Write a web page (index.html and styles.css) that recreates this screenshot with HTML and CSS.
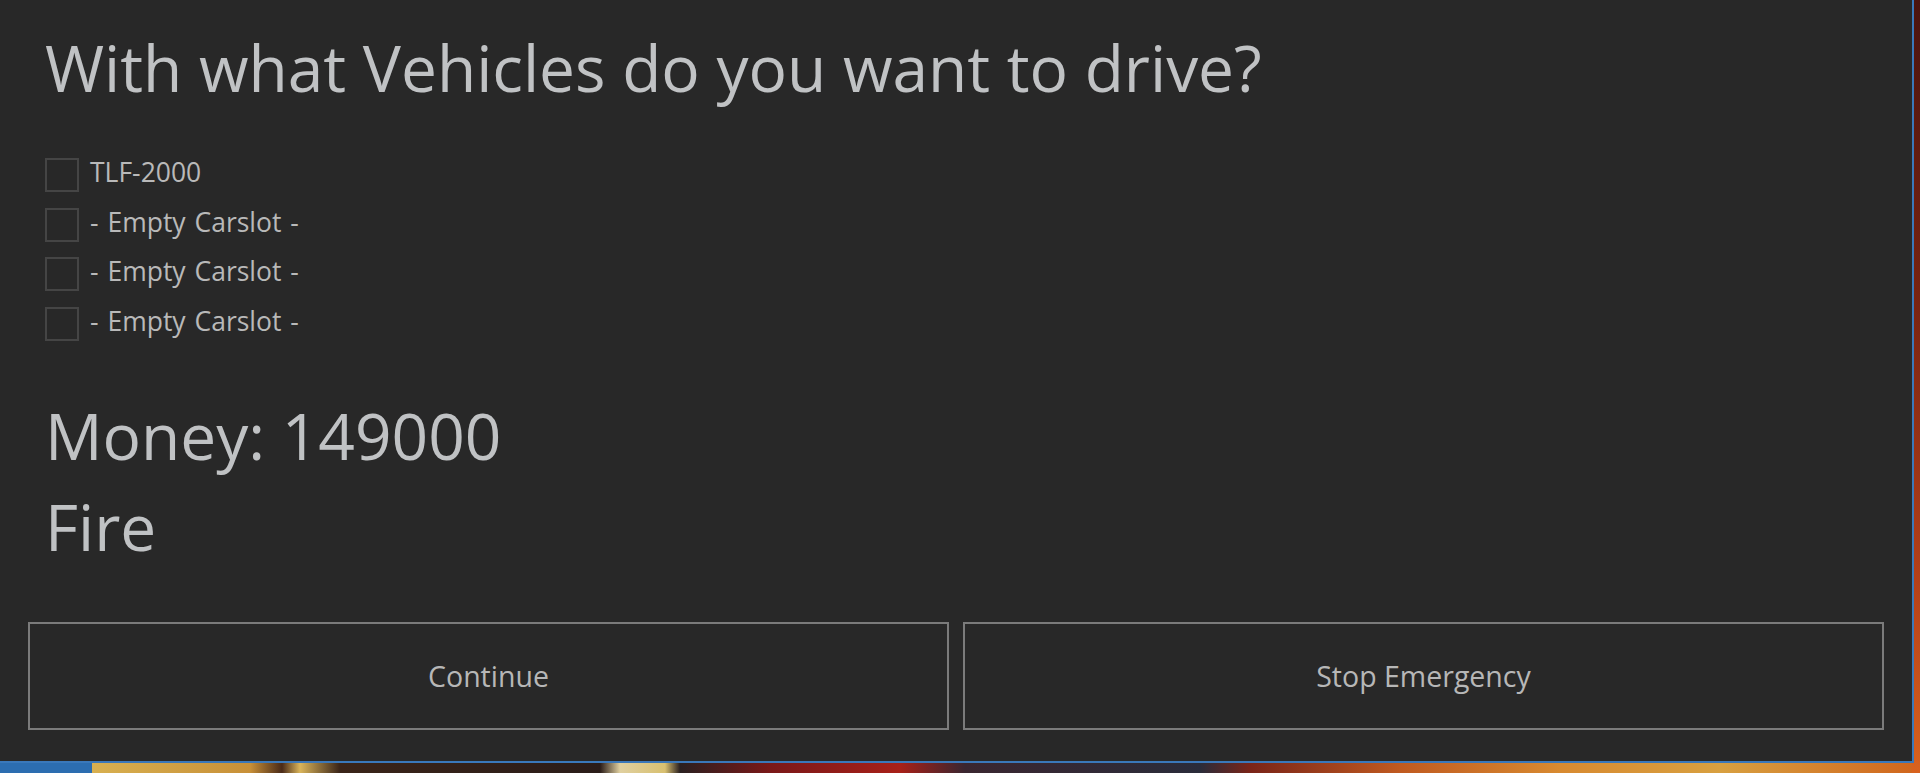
FILE: index.html
```html
<!DOCTYPE html>
<html lang="en">
<head>
<meta charset="utf-8">
<title>Vehicle selection</title>
<link rel="stylesheet" href="styles.css">
</head>
<body>
<div class="window">
  <div class="content">
    <h1 class="title">With what Vehicles do you want to drive?</h1>
    <ul class="slots">
      <li class="slot"><span class="box"></span><span class="label">TLF-2000</span></li>
      <li class="slot"><span class="box"></span><span class="label">- Empty Carslot -</span></li>
      <li class="slot"><span class="box"></span><span class="label">- Empty Carslot -</span></li>
      <li class="slot"><span class="box"></span><span class="label">- Empty Carslot -</span></li>
    </ul>
    <div class="stat money">Money: 149000</div>
    <div class="stat">Fire</div>
  </div>
  <div class="actions">
    <button class="btn">Continue</button>
    <button class="btn">Stop Emergency</button>
  </div>
</div>
</body>
</html>
```
FILE: styles.css
```css
html, body {
  margin: 0;
  padding: 0;
}
body {
  width: 1920px;
  height: 773px;
  overflow: hidden;
  font-family: "Open Sans", "Noto Sans", sans-serif;
  background:
    linear-gradient(180deg, #4a1410 0%, #7a2412 40%, #b4401a 75%, #d8621e 100%) right top / 8px 100% no-repeat,
    linear-gradient(90deg,
      #2c6db0 0px, #2c6db0 92px,
      #d8b050 92px, #c89038 250px, #4a2a18 282px, #d9b45a 300px, #3a2418 340px,
      #2a1c18 600px, #e0d0a0 620px, #d8c070 665px, #2a2020 680px,
      #7a1818 770px, #a82018 900px, #3a2630 965px, #2a2c3a 1200px,
      #7a2418 1250px, #c05a20 1400px, #d88a30 1560px, #d8a040 1720px, #d0641c 1920px) left bottom / 100% 12px no-repeat,
    #2a2a2a;
}
.window {
  box-sizing: border-box;
  width: 1914px;
  height: 763px;
  background: #282828;
  border-right: 2px solid #3a78ba;
  border-bottom: 2px solid #3a78ba;
  padding: 28px 28px 31px 28px;
  display: flex;
  flex-direction: column;
}
.content {
  padding-left: 17px;
  color: #c0c2c4;
}
.title {
  margin: 0;
  font-weight: 400;
  font-size: 64px;
  line-height: 80px;
  color: #c0c2c4;
}
.slots {
  list-style: none;
  margin: 50px 0 0 0;
  padding: 0;
  display: flex;
  flex-direction: column;
  gap: 15.7px;
}
.slot {
  display: flex;
  align-items: flex-start;
  height: 34px;
}
.box {
  box-sizing: border-box;
  width: 34px;
  height: 34px;
  border: 2px solid #454545;
  flex: none;
}
.label {
  margin-left: 11px;
  font-size: 26.5px;
  line-height: 28px;
  color: #b9b9b9;
  word-spacing: 2px;
}
.stat {
  font-size: 64px;
  line-height: 91px;
  color: #c0c2c4;
}
.money {
  margin-top: 49px;
}
.actions {
  margin-top: auto;
  display: flex;
  gap: 14px;
}
.btn {
  flex: 1;
  box-sizing: border-box;
  height: 108px;
  background: transparent;
  border: 2px solid #7b7b7b;
  color: #b7b7b7;
  font-family: "Open Sans", "Noto Sans", sans-serif;
  font-size: 28.5px;
  padding: 0;
}
```
